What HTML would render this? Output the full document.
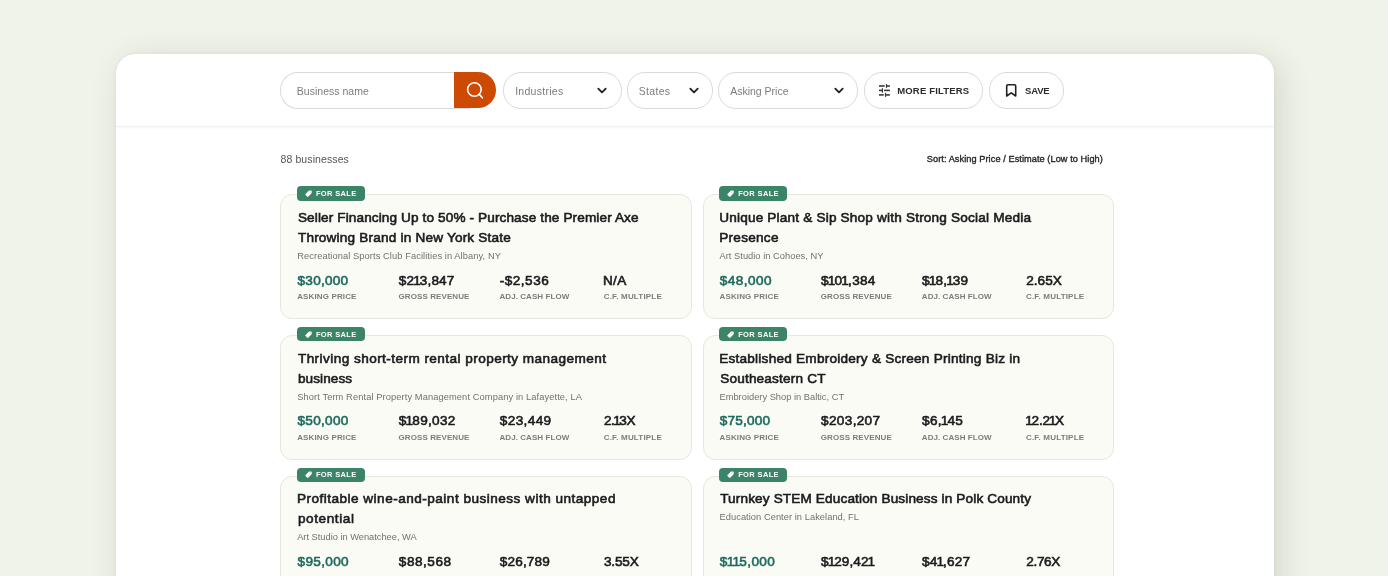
<!DOCTYPE html>
<html><head><meta charset="utf-8">
<style>
*{box-sizing:border-box;margin:0;padding:0}
html,body{width:1388px;height:576px;overflow:hidden;background:#f0f3ea;font-family:"Liberation Sans",sans-serif;position:relative}
#panel{position:absolute;left:116px;top:54px;width:1158px;height:640px;background:#fff;border-radius:20px;box-shadow:6px 6px 32px rgba(45,55,25,0.15),0 0 4px rgba(45,55,25,0.05)}
#hdr{position:absolute;left:116px;top:125.6px;width:1158px;height:1.2px;background:rgba(0,0,0,0.05);box-shadow:0 0.6px 3px rgba(0,0,0,0.09)}
.pill{position:absolute;top:72px;height:36.5px;border:1px solid #dadad6;border-radius:18px;background:#fff}
.chev{position:absolute;top:87px}
.t{position:absolute;white-space:nowrap;line-height:1}
.card{position:absolute;width:411.8px;height:125px;background:#fbfbf6;border:1px solid #e7e7e0;border-radius:12px}
.tag{position:absolute;width:68px;height:14.4px;background:#3c8468;border-radius:4px}
</style></head><body>
<div id="panel"></div><div id="hdr"></div>
<div class="pill" style="left:280px;width:190px;border-radius:18px 0 0 18px;border-right:none"></div>
<div style="position:absolute;left:454px;top:72px;width:42px;height:36px;background:#cc4a03;border-radius:0 18px 18px 0"></div>
<svg style="position:absolute;left:454px;top:72px" width="42" height="36" viewBox="0 0 42 36"><circle cx="20.4" cy="17.5" r="6.8" fill="none" stroke="#fff" stroke-width="1.6"/><line x1="25.3" y1="22.4" x2="28.4" y2="25.8" stroke="#fff" stroke-width="1.6" stroke-linecap="round"/></svg>
<div class="pill" style="left:503.3px;width:118.5px"></div>
<div class="pill" style="left:627px;width:86px"></div>
<div class="pill" style="left:718.3px;width:139.8px"></div>
<div class="pill" style="left:864px;width:119.3px"></div>
<div class="pill" style="left:989.2px;width:75.2px"></div>
<svg class="chev" style="left:596.20px" width="12" height="8" viewBox="0 0 12 8"><path d="M2.3 1.6 L6 5.3 L9.7 1.6" fill="none" stroke="#1f1f1f" stroke-width="1.8" stroke-linecap="round" stroke-linejoin="round"/></svg><svg class="chev" style="left:687.70px" width="12" height="8" viewBox="0 0 12 8"><path d="M2.3 1.6 L6 5.3 L9.7 1.6" fill="none" stroke="#1f1f1f" stroke-width="1.8" stroke-linecap="round" stroke-linejoin="round"/></svg><svg class="chev" style="left:832.85px" width="12" height="8" viewBox="0 0 12 8"><path d="M2.3 1.6 L6 5.3 L9.7 1.6" fill="none" stroke="#1f1f1f" stroke-width="1.8" stroke-linecap="round" stroke-linejoin="round"/></svg>
<svg style="position:absolute;left:878px;top:83px" width="14" height="15" viewBox="878 83 14 15"><g fill="#3a3a3a">
<rect x="879" y="85.2" width="5.7" height="1.6"/><rect x="885.9" y="84" width="1.2" height="3.8"/><rect x="886.9" y="85.2" width="3" height="1.6"/>
<rect x="879" y="89.6" width="3.2" height="1.6"/><rect x="881.8" y="88.2" width="1.2" height="4.5"/><rect x="884.1" y="89.6" width="5.8" height="1.6"/>
<rect x="879" y="94.1" width="4.8" height="1.6"/><rect x="884.9" y="92.9" width="1.2" height="4"/><rect x="886" y="94.1" width="3.9" height="1.6"/></g></svg>
<svg style="position:absolute;left:1004px;top:82px" width="14" height="17" viewBox="1004 82 14 17"><path d="M1006.7 96 V85.9 Q1006.7 84.7 1007.9 84.7 H1014.5 Q1015.7 84.7 1015.7 85.9 V96 L1011.2 92.9 Z" fill="none" stroke="#222" stroke-width="1.6" stroke-linejoin="round"/></svg>
<div class="card" style="left:280.00px;top:193.90px"></div><div class="tag" style="left:297.00px;top:186.20px"><svg width="7.2" height="7.2" viewBox="0 0 8 8" style="position:absolute;left:8.1px;top:3.5px"><path d="M0.6 4.5 L4.2 0.9 Q4.6 0.5 5.2 0.5 L6.6 0.5 Q7.5 0.5 7.5 1.4 L7.5 2.8 Q7.5 3.4 7.1 3.8 L3.5 7.4 Q3 7.9 2.5 7.4 L0.6 5.5 Q0.1 5 0.6 4.5 Z" fill="#fff"/><circle cx="5.7" cy="2.3" r="0.6" fill="#3c8468" fill-opacity="0.6"/></svg></div><div class="card" style="left:702.50px;top:193.90px"></div><div class="tag" style="left:719.30px;top:186.20px"><svg width="7.2" height="7.2" viewBox="0 0 8 8" style="position:absolute;left:8.1px;top:3.5px"><path d="M0.6 4.5 L4.2 0.9 Q4.6 0.5 5.2 0.5 L6.6 0.5 Q7.5 0.5 7.5 1.4 L7.5 2.8 Q7.5 3.4 7.1 3.8 L3.5 7.4 Q3 7.9 2.5 7.4 L0.6 5.5 Q0.1 5 0.6 4.5 Z" fill="#fff"/><circle cx="5.7" cy="2.3" r="0.6" fill="#3c8468" fill-opacity="0.6"/></svg></div><div class="card" style="left:280.00px;top:334.75px"></div><div class="tag" style="left:297.00px;top:327.05px"><svg width="7.2" height="7.2" viewBox="0 0 8 8" style="position:absolute;left:8.1px;top:3.5px"><path d="M0.6 4.5 L4.2 0.9 Q4.6 0.5 5.2 0.5 L6.6 0.5 Q7.5 0.5 7.5 1.4 L7.5 2.8 Q7.5 3.4 7.1 3.8 L3.5 7.4 Q3 7.9 2.5 7.4 L0.6 5.5 Q0.1 5 0.6 4.5 Z" fill="#fff"/><circle cx="5.7" cy="2.3" r="0.6" fill="#3c8468" fill-opacity="0.6"/></svg></div><div class="card" style="left:702.50px;top:334.75px"></div><div class="tag" style="left:719.30px;top:327.05px"><svg width="7.2" height="7.2" viewBox="0 0 8 8" style="position:absolute;left:8.1px;top:3.5px"><path d="M0.6 4.5 L4.2 0.9 Q4.6 0.5 5.2 0.5 L6.6 0.5 Q7.5 0.5 7.5 1.4 L7.5 2.8 Q7.5 3.4 7.1 3.8 L3.5 7.4 Q3 7.9 2.5 7.4 L0.6 5.5 Q0.1 5 0.6 4.5 Z" fill="#fff"/><circle cx="5.7" cy="2.3" r="0.6" fill="#3c8468" fill-opacity="0.6"/></svg></div><div class="card" style="left:280.00px;top:475.60px"></div><div class="tag" style="left:297.00px;top:467.90px"><svg width="7.2" height="7.2" viewBox="0 0 8 8" style="position:absolute;left:8.1px;top:3.5px"><path d="M0.6 4.5 L4.2 0.9 Q4.6 0.5 5.2 0.5 L6.6 0.5 Q7.5 0.5 7.5 1.4 L7.5 2.8 Q7.5 3.4 7.1 3.8 L3.5 7.4 Q3 7.9 2.5 7.4 L0.6 5.5 Q0.1 5 0.6 4.5 Z" fill="#fff"/><circle cx="5.7" cy="2.3" r="0.6" fill="#3c8468" fill-opacity="0.6"/></svg></div><div class="card" style="left:702.50px;top:475.60px"></div><div class="tag" style="left:719.30px;top:467.90px"><svg width="7.2" height="7.2" viewBox="0 0 8 8" style="position:absolute;left:8.1px;top:3.5px"><path d="M0.6 4.5 L4.2 0.9 Q4.6 0.5 5.2 0.5 L6.6 0.5 Q7.5 0.5 7.5 1.4 L7.5 2.8 Q7.5 3.4 7.1 3.8 L3.5 7.4 Q3 7.9 2.5 7.4 L0.6 5.5 Q0.1 5 0.6 4.5 Z" fill="#fff"/><circle cx="5.7" cy="2.3" r="0.6" fill="#3c8468" fill-opacity="0.6"/></svg></div>
<div id="txt" style="position:absolute;left:0;top:0;width:1388px;height:576px;will-change:transform"><span class="t" style="left:297.90px;top:210.69px;font-size:13.6px;letter-spacing:0.115px;color:#1a1b1d;-webkit-text-stroke:0.6px #1a1b1d;">Seller Financing Up to 50% - Purchase the Premier Axe</span><span class="t" style="left:297.90px;top:230.69px;font-size:13.6px;letter-spacing:0.190px;color:#1a1b1d;-webkit-text-stroke:0.6px #1a1b1d;">Throwing Brand in New York State</span><span class="t" style="left:297.20px;top:251.73px;font-size:9.3px;letter-spacing:0.081px;color:#707070;">Recreational Sports Club Facilities in Albany, NY</span><span class="t" style="left:297.50px;top:273.59px;font-size:13.6px;letter-spacing:0.254px;color:#1e6a5d;-webkit-text-stroke:0.6px #1e6a5d;">$30,000</span><span class="t" style="left:398.80px;top:273.59px;font-size:13.6px;letter-spacing:0.152px;color:#1a1b1d;-webkit-text-stroke:0.6px #1a1b1d;">$2<span style="margin:0 -1.1px">1</span>3,847</span><span class="t" style="left:499.80px;top:273.59px;font-size:13.6px;letter-spacing:0.476px;color:#1a1b1d;-webkit-text-stroke:0.6px #1a1b1d;">-$2,536</span><span class="t" style="left:603.00px;top:273.59px;font-size:13.6px;letter-spacing:0.303px;color:#1a1b1d;-webkit-text-stroke:0.6px #1a1b1d;">N/A</span><span class="t" style="left:297.20px;top:293.43px;font-size:8px;font-weight:bold;letter-spacing:0.132px;color:#7c7c7c;">ASKING PRICE</span><span class="t" style="left:398.50px;top:293.43px;font-size:8px;font-weight:bold;letter-spacing:0.095px;color:#7c7c7c;">GROSS REVENUE</span><span class="t" style="left:499.50px;top:293.43px;font-size:8px;font-weight:bold;letter-spacing:0.066px;color:#7c7c7c;">ADJ. CASH FLOW</span><span class="t" style="left:603.70px;top:293.43px;font-size:8px;font-weight:bold;letter-spacing:0.182px;color:#7c7c7c;">C.F. MULTIPLE</span><span class="t" style="left:315.90px;top:189.75px;font-size:7.5px;font-weight:bold;letter-spacing:0.355px;color:#fff;">FOR SALE</span><span class="t" style="left:719.20px;top:210.69px;font-size:13.6px;letter-spacing:0.186px;color:#1a1b1d;-webkit-text-stroke:0.6px #1a1b1d;">Unique Plant &amp; Sip Shop with Strong Social Media</span><span class="t" style="left:719.20px;top:230.69px;font-size:13.6px;letter-spacing:0.262px;color:#1a1b1d;-webkit-text-stroke:0.6px #1a1b1d;">Presence</span><span class="t" style="left:719.50px;top:251.73px;font-size:9.3px;letter-spacing:0.024px;color:#707070;">Art Studio in Cohoes, NY</span><span class="t" style="left:719.80px;top:273.59px;font-size:13.6px;letter-spacing:0.437px;color:#1e6a5d;-webkit-text-stroke:0.6px #1e6a5d;">$48,000</span><span class="t" style="left:821.10px;top:273.59px;font-size:13.6px;letter-spacing:0.280px;color:#1a1b1d;-webkit-text-stroke:0.6px #1a1b1d;">$<span style="margin:0 -1.1px">1</span>0<span style="margin:0 -1.1px">1</span>,384</span><span class="t" style="left:922.10px;top:273.59px;font-size:13.6px;letter-spacing:0.220px;color:#1a1b1d;-webkit-text-stroke:0.6px #1a1b1d;">$<span style="margin:0 -1.1px">1</span>8,<span style="margin:0 -1.1px">1</span>39</span><span class="t" style="left:1026.30px;top:273.59px;font-size:13.6px;letter-spacing:-0.014px;color:#1a1b1d;-webkit-text-stroke:0.6px #1a1b1d;">2.65X</span><span class="t" style="left:719.50px;top:293.43px;font-size:8px;font-weight:bold;letter-spacing:0.132px;color:#7c7c7c;">ASKING PRICE</span><span class="t" style="left:820.80px;top:293.43px;font-size:8px;font-weight:bold;letter-spacing:0.095px;color:#7c7c7c;">GROSS REVENUE</span><span class="t" style="left:921.80px;top:293.43px;font-size:8px;font-weight:bold;letter-spacing:0.066px;color:#7c7c7c;">ADJ. CASH FLOW</span><span class="t" style="left:1026.00px;top:293.43px;font-size:8px;font-weight:bold;letter-spacing:0.182px;color:#7c7c7c;">C.F. MULTIPLE</span><span class="t" style="left:738.20px;top:189.75px;font-size:7.5px;font-weight:bold;letter-spacing:0.355px;color:#fff;">FOR SALE</span><span class="t" style="left:297.90px;top:351.54px;font-size:13.6px;letter-spacing:0.433px;color:#1a1b1d;-webkit-text-stroke:0.6px #1a1b1d;">Thriving short-term rental property management</span><span class="t" style="left:297.90px;top:371.54px;font-size:13.6px;letter-spacing:0.078px;color:#1a1b1d;-webkit-text-stroke:0.6px #1a1b1d;">business</span><span class="t" style="left:297.20px;top:392.58px;font-size:9.3px;letter-spacing:0.096px;color:#707070;">Short Term Rental Property Management Company in Lafayette, LA</span><span class="t" style="left:297.50px;top:414.44px;font-size:13.6px;letter-spacing:0.287px;color:#1e6a5d;-webkit-text-stroke:0.6px #1e6a5d;">$50,000</span><span class="t" style="left:398.80px;top:414.44px;font-size:13.6px;letter-spacing:0.295px;color:#1a1b1d;-webkit-text-stroke:0.6px #1a1b1d;">$<span style="margin:0 -1.1px">1</span>89,032</span><span class="t" style="left:499.80px;top:414.44px;font-size:13.6px;letter-spacing:0.370px;color:#1a1b1d;-webkit-text-stroke:0.6px #1a1b1d;">$23,449</span><span class="t" style="left:604.00px;top:414.44px;font-size:13.6px;letter-spacing:-0.464px;color:#1a1b1d;-webkit-text-stroke:0.6px #1a1b1d;">2.<span style="margin:0 -1.1px">1</span>3X</span><span class="t" style="left:297.20px;top:434.28px;font-size:8px;font-weight:bold;letter-spacing:0.132px;color:#7c7c7c;">ASKING PRICE</span><span class="t" style="left:398.50px;top:434.28px;font-size:8px;font-weight:bold;letter-spacing:0.095px;color:#7c7c7c;">GROSS REVENUE</span><span class="t" style="left:499.50px;top:434.28px;font-size:8px;font-weight:bold;letter-spacing:0.066px;color:#7c7c7c;">ADJ. CASH FLOW</span><span class="t" style="left:603.70px;top:434.28px;font-size:8px;font-weight:bold;letter-spacing:0.182px;color:#7c7c7c;">C.F. MULTIPLE</span><span class="t" style="left:315.90px;top:330.60px;font-size:7.5px;font-weight:bold;letter-spacing:0.355px;color:#fff;">FOR SALE</span><span class="t" style="left:719.20px;top:351.54px;font-size:13.6px;letter-spacing:0.233px;color:#1a1b1d;-webkit-text-stroke:0.6px #1a1b1d;">Established Embroidery &amp; Screen Printing Biz in</span><span class="t" style="left:720.20px;top:371.54px;font-size:13.6px;letter-spacing:0.181px;color:#1a1b1d;-webkit-text-stroke:0.6px #1a1b1d;">Southeastern CT</span><span class="t" style="left:719.50px;top:392.58px;font-size:9.3px;letter-spacing:0.002px;color:#707070;">Embroidery Shop in Baltic, CT</span><span class="t" style="left:719.80px;top:414.44px;font-size:13.6px;letter-spacing:0.204px;color:#1e6a5d;-webkit-text-stroke:0.6px #1e6a5d;">$75,000</span><span class="t" style="left:821.10px;top:414.44px;font-size:13.6px;letter-spacing:0.323px;color:#1a1b1d;-webkit-text-stroke:0.6px #1a1b1d;">$203,207</span><span class="t" style="left:922.10px;top:414.44px;font-size:13.6px;letter-spacing:0.276px;color:#1a1b1d;-webkit-text-stroke:0.6px #1a1b1d;">$6,<span style="margin:0 -1.1px">1</span>45</span><span class="t" style="left:1026.40px;top:414.44px;font-size:13.6px;letter-spacing:-0.224px;color:#1a1b1d;-webkit-text-stroke:0.6px #1a1b1d;"><span style="margin:0 -1.1px">1</span>2.2<span style="margin:0 -1.1px">1</span>X</span><span class="t" style="left:719.50px;top:434.28px;font-size:8px;font-weight:bold;letter-spacing:0.132px;color:#7c7c7c;">ASKING PRICE</span><span class="t" style="left:820.80px;top:434.28px;font-size:8px;font-weight:bold;letter-spacing:0.095px;color:#7c7c7c;">GROSS REVENUE</span><span class="t" style="left:921.80px;top:434.28px;font-size:8px;font-weight:bold;letter-spacing:0.066px;color:#7c7c7c;">ADJ. CASH FLOW</span><span class="t" style="left:1026.00px;top:434.28px;font-size:8px;font-weight:bold;letter-spacing:0.182px;color:#7c7c7c;">C.F. MULTIPLE</span><span class="t" style="left:738.20px;top:330.60px;font-size:7.5px;font-weight:bold;letter-spacing:0.355px;color:#fff;">FOR SALE</span><span class="t" style="left:296.90px;top:492.39px;font-size:13.6px;letter-spacing:0.475px;color:#1a1b1d;-webkit-text-stroke:0.6px #1a1b1d;">Profitable wine-and-paint business with untapped</span><span class="t" style="left:297.90px;top:512.39px;font-size:13.6px;letter-spacing:0.578px;color:#1a1b1d;-webkit-text-stroke:0.6px #1a1b1d;">potential</span><span class="t" style="left:297.20px;top:533.43px;font-size:9.3px;letter-spacing:-0.015px;color:#707070;">Art Studio in Wenatchee, WA</span><span class="t" style="left:297.50px;top:555.29px;font-size:13.6px;letter-spacing:0.337px;color:#1e6a5d;-webkit-text-stroke:0.6px #1e6a5d;">$95,000</span><span class="t" style="left:398.80px;top:555.29px;font-size:13.6px;letter-spacing:0.520px;color:#1a1b1d;-webkit-text-stroke:0.6px #1a1b1d;">$88,568</span><span class="t" style="left:499.80px;top:555.29px;font-size:13.6px;letter-spacing:0.137px;color:#1a1b1d;-webkit-text-stroke:0.6px #1a1b1d;">$26,789</span><span class="t" style="left:604.00px;top:555.29px;font-size:13.6px;letter-spacing:-0.189px;color:#1a1b1d;-webkit-text-stroke:0.6px #1a1b1d;">3.55X</span><span class="t" style="left:297.20px;top:575.13px;font-size:8px;font-weight:bold;letter-spacing:0.132px;color:#7c7c7c;">ASKING PRICE</span><span class="t" style="left:398.50px;top:575.13px;font-size:8px;font-weight:bold;letter-spacing:0.095px;color:#7c7c7c;">GROSS REVENUE</span><span class="t" style="left:499.50px;top:575.13px;font-size:8px;font-weight:bold;letter-spacing:0.066px;color:#7c7c7c;">ADJ. CASH FLOW</span><span class="t" style="left:603.70px;top:575.13px;font-size:8px;font-weight:bold;letter-spacing:0.182px;color:#7c7c7c;">C.F. MULTIPLE</span><span class="t" style="left:315.90px;top:471.45px;font-size:7.5px;font-weight:bold;letter-spacing:0.355px;color:#fff;">FOR SALE</span><span class="t" style="left:720.20px;top:492.39px;font-size:13.6px;letter-spacing:0.135px;color:#1a1b1d;-webkit-text-stroke:0.6px #1a1b1d;">Turnkey STEM Education Business in Polk County</span><span class="t" style="left:719.50px;top:513.43px;font-size:9.3px;letter-spacing:0.048px;color:#707070;">Education Center in Lakeland, FL</span><span class="t" style="left:719.80px;top:555.29px;font-size:13.6px;letter-spacing:0.382px;color:#1e6a5d;-webkit-text-stroke:0.6px #1e6a5d;">$<span style="margin:0 -1.1px">1</span><span style="margin:0 -1.1px">1</span>5,000</span><span class="t" style="left:821.10px;top:555.29px;font-size:13.6px;letter-spacing:0.066px;color:#1a1b1d;-webkit-text-stroke:0.6px #1a1b1d;">$<span style="margin:0 -1.1px">1</span>29,42<span style="margin:0 -1.1px">1</span></span><span class="t" style="left:922.10px;top:555.29px;font-size:13.6px;letter-spacing:0.170px;color:#1a1b1d;-webkit-text-stroke:0.6px #1a1b1d;">$4<span style="margin:0 -1.1px">1</span>,627</span><span class="t" style="left:1026.30px;top:555.29px;font-size:13.6px;letter-spacing:-0.364px;color:#1a1b1d;-webkit-text-stroke:0.6px #1a1b1d;">2.76X</span><span class="t" style="left:719.50px;top:575.13px;font-size:8px;font-weight:bold;letter-spacing:0.132px;color:#7c7c7c;">ASKING PRICE</span><span class="t" style="left:820.80px;top:575.13px;font-size:8px;font-weight:bold;letter-spacing:0.095px;color:#7c7c7c;">GROSS REVENUE</span><span class="t" style="left:921.80px;top:575.13px;font-size:8px;font-weight:bold;letter-spacing:0.066px;color:#7c7c7c;">ADJ. CASH FLOW</span><span class="t" style="left:1026.00px;top:575.13px;font-size:8px;font-weight:bold;letter-spacing:0.182px;color:#7c7c7c;">C.F. MULTIPLE</span><span class="t" style="left:738.20px;top:471.45px;font-size:7.5px;font-weight:bold;letter-spacing:0.355px;color:#fff;">FOR SALE</span><span class="t" style="left:296.80px;top:85.91px;font-size:10.5px;letter-spacing:0.013px;color:#7c7c7c;">Business name</span><span class="t" style="left:515.20px;top:85.91px;font-size:10.5px;letter-spacing:0.270px;color:#7c7c7c;">Industries</span><span class="t" style="left:638.70px;top:85.91px;font-size:10.5px;letter-spacing:0.317px;color:#7c7c7c;">States</span><span class="t" style="left:730.20px;top:85.91px;font-size:10.5px;letter-spacing:-0.001px;color:#7c7c7c;">Asking Price</span><span class="t" style="left:897.20px;top:86.16px;font-size:9.5px;font-weight:bold;letter-spacing:0.175px;color:#2b2b2b;">MORE FILTERS</span><span class="t" style="left:1025.10px;top:86.16px;font-size:9.5px;font-weight:bold;letter-spacing:-0.209px;color:#2b2b2b;">SAVE</span><span class="t" style="left:280.50px;top:153.91px;font-size:10.5px;letter-spacing:0.102px;color:#555;">88 businesses</span><span class="t" style="left:926.80px;top:155.41px;font-size:9.2px;letter-spacing:0.070px;color:#262626;-webkit-text-stroke:0.35px #262626;">Sort: Asking Price / Estimate (Low to High)</span></div>
</body></html>
